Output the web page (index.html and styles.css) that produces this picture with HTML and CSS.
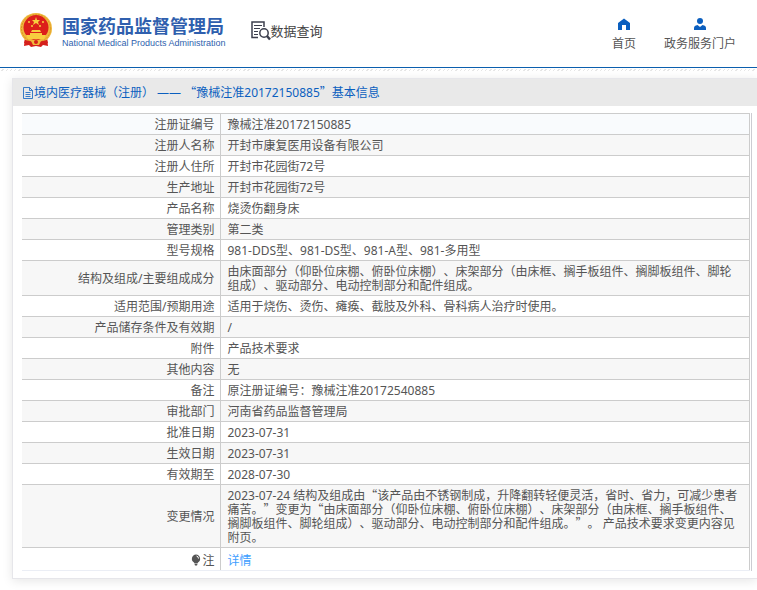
FILE: index.html
```html
<!DOCTYPE html>
<html lang="zh-CN">

<head>
    <meta charset="UTF-8">
    <meta name="viewport" content="width=device-width, initial-scale=1.0">
    <title>国家药品监督管理局 - 数据查询</title>
    <link rel="stylesheet" href="styles.css">
</head>

<body>

    <header class="header">
        <a class="logo" href="#">
            <svg class="emblem" viewBox="0 0 32 36" width="32" height="36" aria-hidden="true">
                <path d="M5 25 L4 34 L9 33 L11 35 L16 34 L21 35 L23 33 L28 34 L27 25 Z" fill="#d5201c"/>
                <ellipse cx="16" cy="16.500" rx="16" ry="15.500" fill="#f0b83c"/>
                <ellipse cx="16" cy="16.500" rx="14.500" ry="14" fill="none" stroke="#d99524" stroke-width="1" stroke-dasharray="2 1"/>
                <circle cx="16" cy="15.500" r="12.500" fill="#dc1f1a"/>
                <path d="M16 5 L17 8 H20 L18 10 L19 13 L16 11 L13 13 L14 10 L12 8 H15 Z" fill="#f7cf3f"/>
                <g fill="#f7cf3f">
                    <circle cx="9" cy="10" r="1"/>
                    <circle cx="12" cy="14" r="1"/>
                    <circle cx="20" cy="14" r="1"/>
                    <circle cx="23" cy="10" r="1"/>
                    <path d="M12 18 H20 L21 20 H11 Z M10 21 H22 V23 H10 Z M6 23 H26 L24 27 H8 Z"/>
                </g>
                <path d="M5 28 Q16 31 27 28 L28 31 Q22 31 20 34 H12 Q10 31 4 31 Z" fill="#d5201c"/>
                <path d="M11 29 Q16 26 21 29 L19 33 H13 Z" fill="#f0b83c"/>
                <circle cx="16" cy="30" r="2" fill="#d5201c"/>
            </svg>
            <span class="logo-text">
                <span class="logo-cn">国家药品监督管理局</span>
                <span class="logo-en">National Medical Products Administration</span>
            </span>
        </a>
        <div class="search-title">
            <svg viewBox="0 0 20 20" width="20" height="20" fill="none" stroke="#3c3f4d" aria-hidden="true">
                <path d="M7 16.500 H1 V1 H13 V6" stroke-width="1.500"/>
                <path d="M3 4.500 H11 M3 7.500 H9 M3 10.500 H7 M3 13.500 H7" stroke-width="1"/>
                <circle cx="13" cy="12" r="4.200" stroke-width="1.500"/>
                <path d="M16 15 L19 18.500" stroke-width="2.500"/>
            </svg>
            <span>数据查询</span>
        </div>
        <nav class="nav">
            <a href="#">
                <svg viewBox="0 0 12 12" width="12" height="12" aria-hidden="true">
                    <path d="M6 0.500 L12 5 V12 H8 V7 H4 V12 H0 V5 Z" fill="#0b5fbf"/>
                </svg>
                首页
            </a>
            <a href="#">
                <svg viewBox="0 0 12 12" width="12" height="12" fill="#0b5fbf" aria-hidden="true">
                    <circle cx="6" cy="3" r="3"/>
                    <path d="M0 12 V10 Q0 7.500 3.500 7 L6 9 L8.500 7 Q12 7.500 12 10 V12 Z"/>
                </svg>
                政务服务门户
            </a>
        </nav>
    </header>
    <div class="hatch"></div>

    <main class="panel">
        <h1 class="panel-title">
            <svg viewBox="0 0 12 12" width="12" height="12" fill="none" stroke="#0b5fbf" aria-hidden="true">
                <path d="M1.500 0.500 H7.500 L10.500 3.500 V11.500 H1.500 Z M7.500 0.500 V3.500 H10.500 M3.500 5.500 H8.500 M3.500 7.500 H8.500 M3.500 9.500 H8.500" stroke-width="0.800"/>
            </svg>
            <span>境内医疗器械（注册） —— <span class="quote">“</span>豫械注准20172150885<span class="quote">”</span>基本信息</span>
        </h1>
        <div class="panel-body">
            <div class="table-wrap">
                <table class="info">
                    <tr><th scope="row">注册证编号</th><td>豫械注准20172150885</td></tr>
                    <tr><th scope="row">注册人名称</th><td>开封市康复医用设备有限公司</td></tr>
                    <tr><th scope="row">注册人住所</th><td>开封市花园街72号</td></tr>
                    <tr><th scope="row">生产地址</th><td>开封市花园街72号</td></tr>
                    <tr><th scope="row">产品名称</th><td>烧烫伤翻身床</td></tr>
                    <tr><th scope="row">管理类别</th><td>第二类</td></tr>
                    <tr><th scope="row">型号规格</th><td>981-DDS型、981-DS型、981-A型、981-多用型</td></tr>
                    <tr><th scope="row">结构及组成/主要组成成分</th><td>由床面部分（仰卧位床棚、俯卧位床棚）、床架部分（由床框、搁手板组件、搁脚板组件、脚轮组成）、驱动部分、电动控制部分和配件组成。</td></tr>
                    <tr><th scope="row">适用范围/预期用途</th><td>适用于烧伤、烫伤、瘫痪、截肢及外科、骨科病人治疗时使用。</td></tr>
                    <tr><th scope="row">产品储存条件及有效期</th><td>/</td></tr>
                    <tr><th scope="row">附件</th><td>产品技术要求</td></tr>
                    <tr><th scope="row">其他内容</th><td>无</td></tr>
                    <tr><th scope="row">备注</th><td>原注册证编号：豫械注准20172540885</td></tr>
                    <tr><th scope="row">审批部门</th><td>河南省药品监督管理局</td></tr>
                    <tr><th scope="row">批准日期</th><td>2023-07-31</td></tr>
                    <tr><th scope="row">生效日期</th><td>2023-07-31</td></tr>
                    <tr><th scope="row">有效期至</th><td>2028-07-30</td></tr>
                    <tr><th scope="row">变更情况</th><td>2023-07-24 结构及组成由<span class="quote">“</span>该产品由不锈钢制成，升降翻转轻便灵活，省时、省力，可减少患者痛苦。<span class="quote">”</span>变更为<span class="quote">“</span>由床面部分（仰卧位床棚、俯卧位床棚）、床架部分（由床框、搁手板组件、搁脚板组件、脚轮组成）、驱动部分、电动控制部分和配件组成。<span class="quote">”</span>。 产品技术要求变更内容见附页。</td></tr>
                    <tr class="note">
                        <th scope="row">
                            <svg viewBox="0 0 10 12" width="10" height="12" aria-hidden="true">
                                <path d="M5 0.500 A4.300 4.300 0 0 1 7 8.500 L6.500 9.500 H3.500 L3 8.500 A4.300 4.300 0 0 1 5 0.500 Z M3.500 10 H6.500 L6 11.500 H4 Z" fill="#555"/>
                                <path d="M5.500 2 Q7.500 2.500 7.500 4.500" fill="none" stroke="#fff"/>
                            </svg>注
                        </th>
                        <td><a href="#">详情</a></td>
                    </tr>
                </table>
            </div>
        </div>
    </main>

</body>

</html>
```

FILE: styles.css
```css
* {
    margin: 0;
    padding: 0;
    box-sizing: border-box;
}

body {
    background: #fff;
    color: #555;
    font-family: "Noto Sans", "Noto Sans CJK SC", sans-serif;
    font-size: 12px;
    line-height: 14px;
    text-spacing-trim: space-all;
}

a {
    text-decoration: none;
}

.quote {
    font-family: "Noto Sans CJK SC", sans-serif;
    line-height: 1;
}

/* Header */
.header {
    display: flex;
    align-items: flex-start;
    padding: 12px 21px 0 20px;
    height: 68px;
    border-bottom: 1px solid #0b5fae;
}

.logo {
    display: flex;
    gap: 10px;
    color: #2f5fae;
}

.logo-text {
    display: flex;
    flex-direction: column;
    padding-top: 4px;
    white-space: nowrap;
}

.logo-cn {
    font-size: 18px;
    font-weight: bold;
    line-height: 20px;
}

.logo-en {
    font-family: "Liberation Sans", Arial, sans-serif;
    font-size: 9px;
    line-height: 14px;
}

.search-title {
    display: flex;
    align-items: center;
    margin: 9px 0 0 25px;
    color: #444;
    font-size: 13px;
    line-height: 20px;
}

.nav {
    display: flex;
    gap: 28px;
    margin-left: auto;
    padding-top: 6px;
}

.nav a {
    display: flex;
    flex-direction: column;
    align-items: center;
    gap: 7px;
    color: #555;
}

.hatch {
    height: 2px;
    margin-top: 1px;
    background: repeating-linear-gradient(135deg, #fff 0, #fff 2px, #e6e6e6 2px, #e6e6e6 3px);
}

/* Detail panel */
.panel {
    margin: 7px 0 12px 12px;
    border: 1px solid #e6e6ea;
    border-right: none;
    box-shadow: 0 2px 10px rgba(0, 0, 0, 0.1);
}

.panel-title {
    display: flex;
    align-items: center;
    padding: 7px 9px 6px;
    background: #e9e9e9;
    color: #0b5fbf;
    font-size: 12px;
    font-weight: normal;
}

.panel-body {
    padding: 7px 5px 7px 9px;
}

.table-wrap {
    padding-right: 1px;
    border-right: 1px solid #ccccd2;
}

.info {
    width: 100%;
    border-collapse: collapse;
    border-top: 1px solid #ccc;
    border-right: 1px solid #ccc;
    border-bottom: 1px solid #ebeef5;
}

.info th,
.info td {
    padding: 4px 11px 2px 7px;
    border-bottom: 1px solid #ccc;
    vertical-align: middle;
}

.info th {
    width: 198px;
    padding-right: 5px;
    border-right: 1px solid #ccc;
    font-weight: normal;
    text-align: right;
}

.info tr:first-child {
    background: #f9fbfd;
}

.info tr:nth-child(even) {
    background: #f7f7f7;
}

.info .note th,
.info .note td {
    padding-top: 6px;
    border-bottom-color: #ebeef5;
}

.note svg {
    vertical-align: -1px;
    margin-right: 1px;
}

.note a {
    color: #409eff;
}
```
